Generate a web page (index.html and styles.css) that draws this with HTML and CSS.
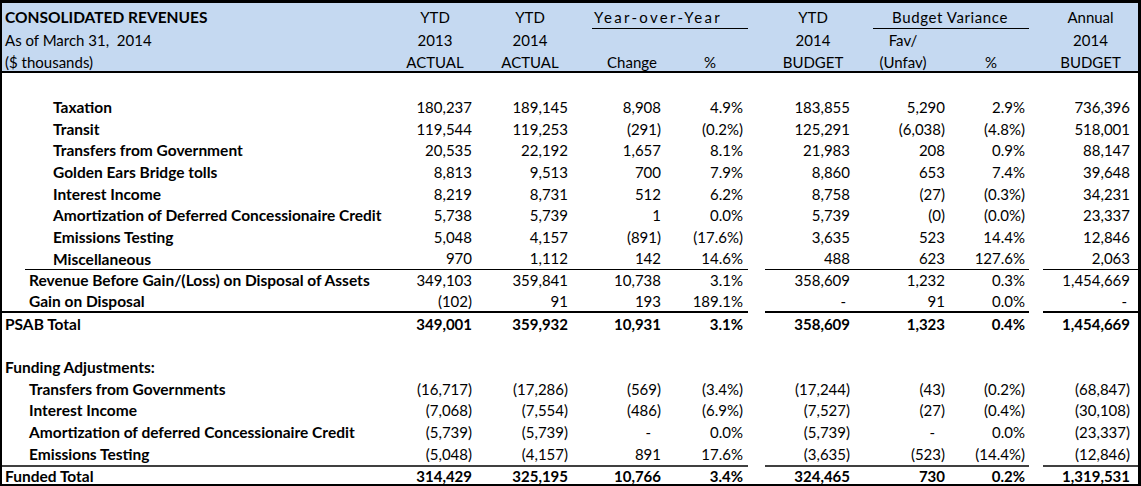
FILE: index.html
```html
<!DOCTYPE html>
<html>
<head>
<meta charset="utf-8">
<link rel="stylesheet" href="styles.css">
<title>Consolidated Revenues</title>
</head>
<body>
<div class="sheet">
<table class="rev">
<colgroup>
<col class="w-label"><col class="w-c1"><col class="w-c2"><col class="w-c3"><col class="w-c4"><col class="w-g1"><col class="w-c5"><col class="w-c6"><col class="w-c7"><col class="w-g2"><col class="w-c8">
</colgroup>
<thead>
<tr class="h1">
<th class="lbl title">CONSOLIDATED REVENUES</th>
<th class="hc">YTD</th>
<th class="hc">YTD</th>
<th class="hc yoy" colspan="2">Year-over-Year</th>
<th></th>
<th class="hc">YTD</th>
<th class="hc bv" colspan="2">Budget Variance</th>
<th></th>
<th class="hc">Annual</th>
</tr>
<tr class="h2">
<th class="lbl sub">As of March 31,&nbsp; 2014</th>
<th class="hc">2013</th>
<th class="hc">2014</th>
<th></th><th></th><th></th>
<th class="hc">2014</th>
<th class="hc c6h">Fav/</th>
<th></th><th></th>
<th class="hc">2014</th>
</tr>
<tr class="h3">
<th class="lbl sub">($ thousands)</th>
<th class="hc">ACTUAL</th>
<th class="hc">ACTUAL</th>
<th class="hc chg">Change</th>
<th class="hc pct">%</th>
<th></th>
<th class="hc">BUDGET</th>
<th class="hc c6h">(Unfav)</th>
<th class="hc">%</th>
<th></th>
<th class="hc">BUDGET</th>
</tr>
</thead>
<tbody>
<tr class="blank"><td colspan="11"></td></tr>
<tr><td class="lbl l2">Taxation</td><td>180,237</td><td>189,145</td><td>8,908</td><td>4.9%</td><td class="g"></td><td>183,855</td><td>5,290</td><td>2.9%</td><td class="g"></td><td>736,396</td></tr>
<tr><td class="lbl l2">Transit</td><td>119,544</td><td>119,253</td><td>(291)</td><td>(0.2%)</td><td class="g"></td><td>125,291</td><td>(6,038)</td><td>(4.8%)</td><td class="g"></td><td>518,001</td></tr>
<tr><td class="lbl l2">Transfers from Government</td><td>20,535</td><td>22,192</td><td>1,657</td><td>8.1%</td><td class="g"></td><td>21,983</td><td>208</td><td>0.9%</td><td class="g"></td><td>88,147</td></tr>
<tr><td class="lbl l2">Golden Ears Bridge tolls</td><td>8,813</td><td>9,513</td><td>700</td><td>7.9%</td><td class="g"></td><td>8,860</td><td>653</td><td>7.4%</td><td class="g"></td><td>39,648</td></tr>
<tr><td class="lbl l2">Interest Income</td><td>8,219</td><td>8,731</td><td>512</td><td>6.2%</td><td class="g"></td><td>8,758</td><td>(27)</td><td>(0.3%)</td><td class="g"></td><td>34,231</td></tr>
<tr><td class="lbl l2">Amortization of Deferred Concessionaire Credit</td><td>5,738</td><td>5,739</td><td>1</td><td>0.0%</td><td class="g"></td><td>5,739</td><td>(0)</td><td>(0.0%)</td><td class="g"></td><td>23,337</td></tr>
<tr><td class="lbl l2">Emissions Testing</td><td>5,048</td><td>4,157</td><td>(891)</td><td>(17.6%)</td><td class="g"></td><td>3,635</td><td>523</td><td>14.4%</td><td class="g"></td><td>12,846</td></tr>
<tr class="rule-thin"><td class="lbl l2 lbl-rule">Miscellaneous</td><td>970</td><td>1,112</td><td>142</td><td>14.6%</td><td class="g"></td><td>488</td><td>623</td><td>127.6%</td><td class="g"></td><td>2,063</td></tr>
<tr><td class="lbl l1">Revenue Before Gain/(Loss) on Disposal of Assets</td><td>349,103</td><td>359,841</td><td>10,738</td><td>3.1%</td><td class="g"></td><td>358,609</td><td>1,232</td><td>0.3%</td><td class="g"></td><td>1,454,669</td></tr>
<tr class="rule-thick"><td class="lbl l1">Gain on Disposal</td><td>(102)</td><td>91</td><td>193</td><td>189.1%</td><td class="g"></td><td><span class="dash-n">-</span></td><td>91</td><td>0.0%</td><td class="g"></td><td><span class="dash-s">-</span></td></tr>
<tr class="total"><td class="lbl l0">PSAB Total</td><td>349,001</td><td>359,932</td><td>10,931</td><td>3.1%</td><td class="g"></td><td>358,609</td><td>1,323</td><td>0.4%</td><td class="g"></td><td>1,454,669</td></tr>
<tr class="blank2"><td colspan="11"></td></tr>
<tr><td class="lbl l0">Funding Adjustments:</td><td colspan="10"></td></tr>
<tr><td class="lbl l1">Transfers from Governments</td><td>(16,717)</td><td>(17,286)</td><td>(569)</td><td>(3.4%)</td><td class="g"></td><td>(17,244)</td><td>(43)</td><td>(0.2%)</td><td class="g"></td><td>(68,847)</td></tr>
<tr><td class="lbl l1">Interest Income</td><td>(7,068)</td><td>(7,554)</td><td>(486)</td><td>(6.9%)</td><td class="g"></td><td>(7,527)</td><td>(27)</td><td>(0.4%)</td><td class="g"></td><td>(30,108)</td></tr>
<tr><td class="lbl l1">Amortization of deferred Concessionaire Credit</td><td>(5,739)</td><td>(5,739)</td><td><span class="dash-w">-</span></td><td>0.0%</td><td class="g"></td><td>(5,739)</td><td><span class="dash-w">-</span></td><td>0.0%</td><td class="g"></td><td>(23,337)</td></tr>
<tr><td class="lbl l1">Emissions Testing</td><td>(5,048)</td><td>(4,157)</td><td>891</td><td>17.6%</td><td class="g"></td><td>(3,635)</td><td>(523)</td><td>(14.4%)</td><td class="g"></td><td>(12,846)</td></tr>
<tr class="total funded"><td class="lbl l0">Funded Total</td><td>314,429</td><td>325,195</td><td>10,766</td><td>3.4%</td><td class="g"></td><td>324,465</td><td>730</td><td>0.2%</td><td class="g"></td><td>1,319,531</td></tr>
</tbody>
</table>
</div>
</body>
</html>
```
FILE: styles.css
```css
html, body {
  margin: 0;
  padding: 0;
  background: #ffffff;
}

.sheet {
  width: 1141px;
  height: 486px;
  overflow: hidden;
  box-sizing: border-box;
  border-top: 3px solid #000;
  border-left: 2px solid #000;
  border-right: 3px solid #000;
  border-bottom: 2px solid #000;
  font-family: Lato, "Open Sans", sans-serif;
  font-size: 15px;
  color: #000;
}

.rev {
  width: 100%;
  table-layout: fixed;
  border-collapse: separate;
  border-spacing: 0;
}

.w-label { width: 393px; }
.w-c1 { width: 80px; }
.w-c2 { width: 110px; }
.w-c3 { width: 94px; }
.w-c4 { width: 69px; }
.w-g1 { width: 17px; }
.w-c5 { width: 96px; }
.w-c6 { width: 92px; }
.w-c7 { width: 76px; }
.w-g2 { width: 14px; }
.w-c8 { width: 95px; }

.rev th, .rev td {
  padding: 0;
  line-height: 18px;
  white-space: nowrap;
  overflow: visible;
}

/* ---------- header ---------- */
.rev thead th {
  background-color: #c5d9f1;
  font-weight: normal;
  text-align: center;
}
.rev thead tr.h3 th {
  border-bottom: 2px solid #000;
}
.h1 { height: 26px; }
.h2 { height: 22px; }
.h3 { height: 20px; }
.rev .h1 th { vertical-align: top; padding-top: 5px; }
.rev .h2 th { vertical-align: top; padding-top: 2px; }
.rev .h3 th { vertical-align: top; padding-top: 2px; }

.rev thead th.lbl {
  text-align: left;
  padding-left: 3px;
}
.rev thead th.title {
  font-weight: bold;
  font-size: 15.5px;
}

.rev thead th.yoy {
  padding-right: 17px;
  letter-spacing: 2.3px;
  background-image: linear-gradient(#000, #000);
  background-repeat: no-repeat;
  background-size: 156px 1px;
  background-position: 7px 100%;
}
.rev thead th.bv {
  padding-left: 10px;
  letter-spacing: 0.6px;
  background-image: linear-gradient(#000, #000);
  background-repeat: no-repeat;
  background-size: 157px 1px;
  background-position: 12px 100%;
}
.rev thead th.pct { padding-right: 7px; }
.rev thead th.c6h { padding-right: 8px; }

/* ---------- body ---------- */
.rev tbody tr { height: 21.7px; }
.rev tbody tr.blank { height: 23px; }
.rev tbody tr.funded { height: 19px; }
.rev tbody td {
  text-align: right;
  vertical-align: middle;
}
.rev tbody td:nth-child(2) { padding-right: 3px; }
.rev tbody td:nth-child(3) { padding-right: 17px; }
.rev tbody td:nth-child(4) { padding-right: 18px; }
.rev tbody td:nth-child(5) { padding-right: 5px; }
.rev tbody td:nth-child(7) { padding-right: 11px; }
.rev tbody td:nth-child(8) { padding-right: 8px; }
.rev tbody td:nth-child(9) { padding-right: 4px; }
.rev tbody td:nth-child(11) { padding-right: 8px; }

.dash-n { padding-right: 4px; }
.dash-s { padding-right: 3px; }
.dash-w { padding-right: 10px; }

.rev tbody td.lbl {
  text-align: left;
  font-weight: bold;
  font-size: 15.5px;
}
.rev tbody td.l0 { padding-left: 3px; }
.rev tbody td.l1 { padding-left: 27px; }
.rev tbody td.l2 { padding-left: 51px; }

.total td { font-weight: bold; }

/* ---------- rules ---------- */
.rule-thin td:not(.g) {
  border-bottom: 1px solid #000;
}
.rule-thin td.lbl-rule {
  border-bottom: none;
  background-image: linear-gradient(#000, #000);
  background-repeat: no-repeat;
  background-size: calc(100% - 23px) 1px;
  background-position: right bottom;
}
.rule-thick td:not(.g) {
  border-bottom: 2px solid #000;
}
.funded td:not(.g) {
  border-top: 2px solid #404040;
}
```
